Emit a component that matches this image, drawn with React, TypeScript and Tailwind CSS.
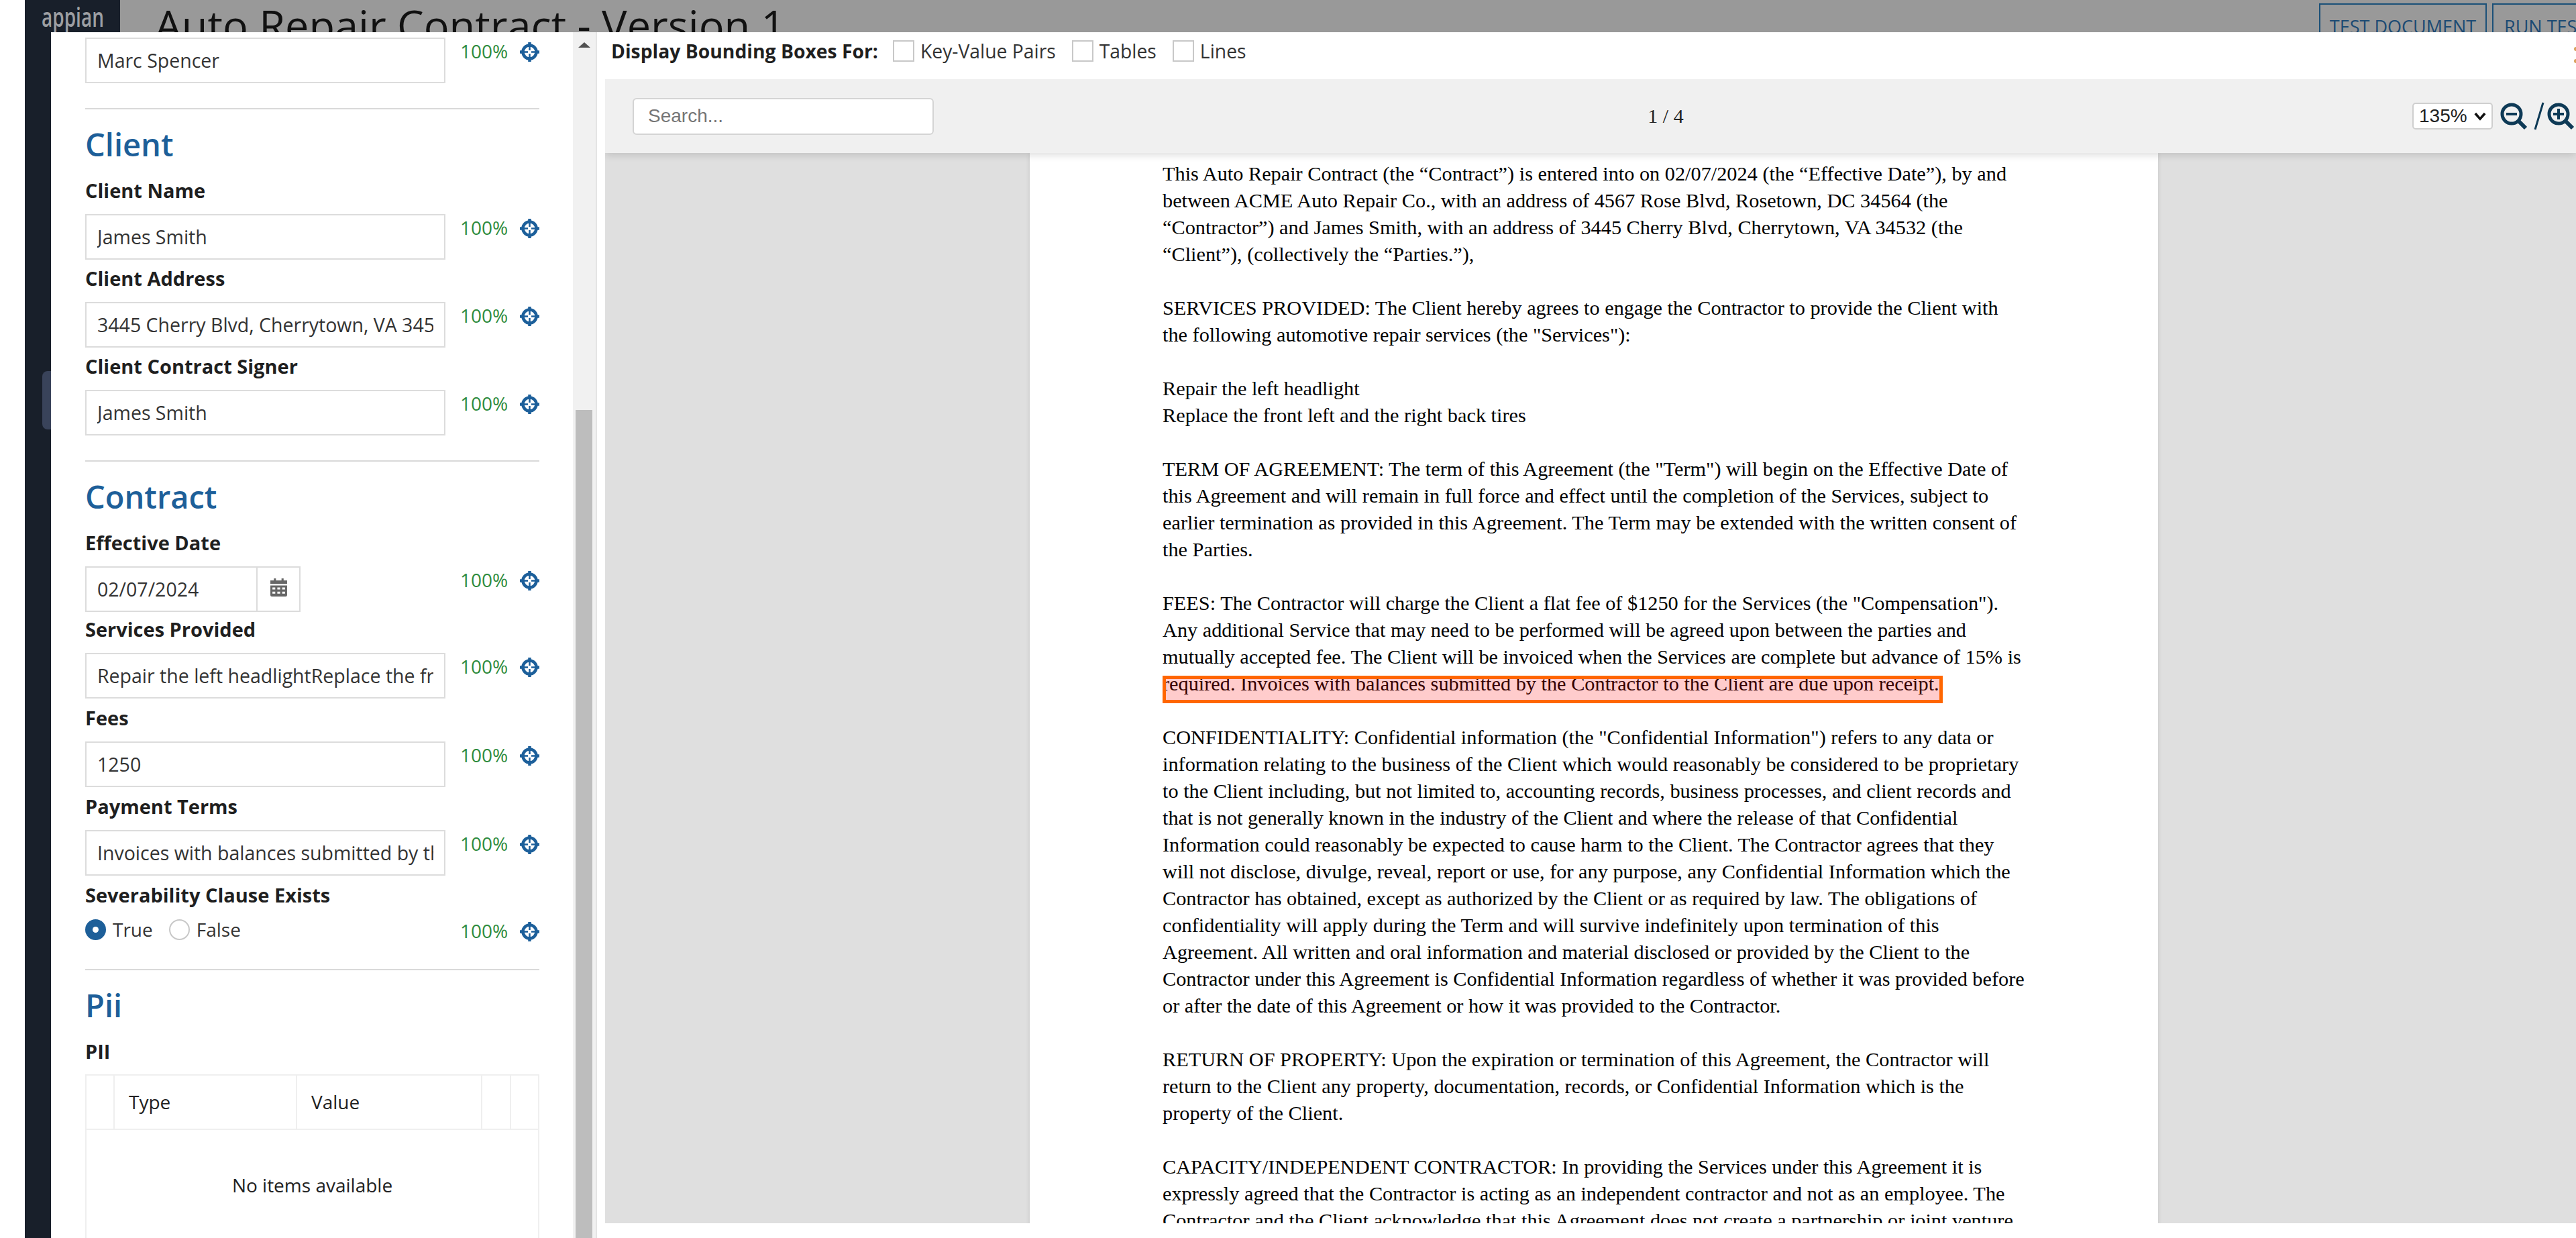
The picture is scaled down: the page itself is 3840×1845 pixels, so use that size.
import React from "react";

const FONT = "font-['Open_Sans',sans-serif]";

function Target() {
  return (
    <svg viewBox="0 0 29 29" className="w-[29px] h-[29px] shrink-0" fill="none" stroke="#1c5f9a">
      <circle cx="14.5" cy="14.5" r="10" strokeWidth="4.5" />
      <path d="M14.5 0v7M14.5 22v7M0 14.5h7M22 14.5h7" strokeWidth="4.5" />
      <path d="M14.5 6v6M14.5 17v6M6 14.5h6M17 14.5h6" strokeWidth="2.5" />
    </svg>
  );
}

function Conf({ top = "mt-[1px]" }: { top?: string }) {
  return (
    <div className={`flex items-start ${top}`}>
      <span className="ml-[22px] w-[69px] text-[28px] leading-[38px] text-[#2e8b3d]">100%</span>
      <span className="ml-[20px] mt-[6px]"><Target /></span>
    </div>
  );
}

function Label({ children }: { children: React.ReactNode }) {
  return <div className="h-[36px] text-[29px] leading-[36px] font-bold text-[#1f1f1f] whitespace-nowrap">{children}</div>;
}

function Field({ label, value }: { label: string; value: string }) {
  return (
    <div>
      <Label>{label}</Label>
      <div className="flex items-start w-[677px] mt-[17px]">
        <input readOnly value={value} className={`w-[537px] h-[68px] border-2 border-[#dcdcdc] bg-white px-[16px] text-[28.5px] text-[#333] outline-none ${FONT}`} />
        <Conf />
      </div>
    </div>
  );
}

function Heading({ children }: { children: React.ReactNode }) {
  return <div className="text-[47px] leading-[60px] font-semibold text-[#1d5f99]">{children}</div>;
}

const DOC: string[] = [
  "This Auto Repair Contract (the “Contract”) is entered into on 02/07/2024 (the “Effective Date”), by and",
  "between ACME Auto Repair Co., with an address of 4567 Rose Blvd, Rosetown, DC 34564 (the",
  "“Contractor”) and James Smith, with an address of 3445 Cherry Blvd, Cherrytown, VA 34532 (the",
  "“Client”), (collectively the “Parties.”),",
  "",
  "SERVICES PROVIDED: The Client hereby agrees to engage the Contractor to provide the Client with",
  "the following automotive repair services (the \"Services\"):",
  "",
  "Repair the left headlight",
  "Replace the front left and the right back tires",
  "",
  "TERM OF AGREEMENT: The term of this Agreement (the \"Term\") will begin on the Effective Date of",
  "this Agreement and will remain in full force and effect until the completion of the Services, subject to",
  "earlier termination as provided in this Agreement. The Term may be extended with the written consent of",
  "the Parties.",
  "",
  "FEES: The Contractor will charge the Client a flat fee of $1250 for the Services (the \"Compensation\").",
  "Any additional Service that may need to be performed will be agreed upon between the parties and",
  "mutually accepted fee. The Client will be invoiced when the Services are complete but advance of 15% is",
  "required. Invoices with balances submitted by the Contractor to the Client are due upon receipt.",
  "",
  "CONFIDENTIALITY: Confidential information (the \"Confidential Information\") refers to any data or",
  "information relating to the business of the Client which would reasonably be considered to be proprietary",
  "to the Client including, but not limited to, accounting records, business processes, and client records and",
  "that is not generally known in the industry of the Client and where the release of that Confidential",
  "Information could reasonably be expected to cause harm to the Client. The Contractor agrees that they",
  "will not disclose, divulge, reveal, report or use, for any purpose, any Confidential Information which the",
  "Contractor has obtained, except as authorized by the Client or as required by law. The obligations of",
  "confidentiality will apply during the Term and will survive indefinitely upon termination of this",
  "Agreement. All written and oral information and material disclosed or provided by the Client to the",
  "Contractor under this Agreement is Confidential Information regardless of whether it was provided before",
  "or after the date of this Agreement or how it was provided to the Contractor.",
  "",
  "RETURN OF PROPERTY: Upon the expiration or termination of this Agreement, the Contractor will",
  "return to the Client any property, documentation, records, or Confidential Information which is the",
  "property of the Client.",
  "",
  "CAPACITY/INDEPENDENT CONTRACTOR: In providing the Services under this Agreement it is",
  "expressly agreed that the Contractor is acting as an independent contractor and not as an employee. The",
  "Contractor and the Client acknowledge that this Agreement does not create a partnership or joint venture",
];

function Magnifier({ plus }: { plus?: boolean }) {
  return (
    <svg viewBox="0 0 41 41" className="w-[41px] h-[41px]" fill="none" stroke="#0e3a56">
      <circle cx="17" cy="17" r="14" strokeWidth="5" />
      <path d="M27 27l11 11" strokeWidth="6" />
      <path d="M9 17h16" strokeWidth="4" />
      {plus && <path d="M17 9v16" strokeWidth="4" />}
    </svg>
  );
}

function Check({ label }: { label: string }) {
  return (
    <div className="flex items-center">
      <span className="w-[32px] h-[32px] border-2 border-[#c8c8c8] bg-white" />
      <span className="ml-[9px] text-[28.3px] leading-[38px] text-[#333]">{label}</span>
    </div>
  );
}

export default function App() {
  return (
    <div className={`flex w-[3840px] h-[1845px] overflow-hidden bg-white ${FONT}`}>
      <div className="w-[37px] shrink-0" />
      <div className="flex flex-col flex-1 min-w-0">
        <div className="flex h-[48px] shrink-0 overflow-hidden bg-[#999999]">
          <div className="w-[142px] shrink-0 overflow-hidden bg-[#181f2a] pl-[25px] pt-[5px] text-[28px] leading-[28px] font-semibold text-[#9d9fa3]">
            <div className="scale-y-[1.4] origin-top">appian</div>
          </div>
          <div className="flex flex-1 justify-between">
            <div className="ml-[52px] -mt-[6px] text-[63px] leading-[86px] text-[#111] whitespace-nowrap">Auto Repair Contract - Version 1</div>
            <div className="flex gap-[8px] pt-[5px]">
              <div className="w-[250px] h-[70px] border-2 border-[#1b5078] text-center text-[27px] leading-[66px] text-[#1b4a73] whitespace-nowrap">TEST DOCUMENT</div>
              <div className="w-[125px] h-[70px] border-2 border-r-0 border-[#1b5078] pl-[16px] text-[27px] leading-[66px] text-[#1b4a73] whitespace-nowrap">RUN TEST</div>
            </div>
          </div>
        </div>
        <div className="flex flex-1 min-h-0">
          <div className="relative w-[39px] shrink-0 bg-[#181f2a]">
            <div className="absolute left-[26px] top-[505px] w-[13px] h-[87px] rounded-l-[8px] bg-[#39435a]" />
          </div>
          <div className="flex w-[813px] shrink-0 bg-white">
            <div className="w-[778px] shrink-0 pl-[51px] overflow-hidden">
              <div className="flex items-start mt-[8px] w-[677px]">
                <input readOnly value="Marc Spencer" className={`w-[537px] h-[68px] border-2 border-[#dcdcdc] bg-white px-[16px] text-[28.5px] text-[#333] outline-none ${FONT}`} />
                <Conf />
              </div>
              <div className="mt-[37px] w-[677px] h-[2px] bg-[#d9d9d9]" />
              <div className="mt-[22px]"><Heading>Client</Heading></div>
              <div className="mt-[21px] flex flex-col gap-[10px]">
                <Field label="Client Name" value="James Smith" />
                <Field label="Client Address" value="3445 Cherry Blvd, Cherrytown, VA 34532" />
                <Field label="Client Contract Signer" value="James Smith" />
              </div>
              <div className="mt-[37px] w-[677px] h-[2px] bg-[#d9d9d9]" />
              <div className="mt-[22px]"><Heading>Contract</Heading></div>
              <div className="mt-[21px]">
                <Label>Effective Date</Label>
                <div className="flex items-start w-[677px] mt-[17px]">
                  <div className="flex w-[321px] h-[68px] border-2 border-[#dcdcdc]">
                    <div className="w-[253px] px-[16px] text-[28.5px] leading-[64px] text-[#333]">02/07/2024</div>
                    <div className="flex flex-1 items-center justify-center border-l-2 border-[#dcdcdc] pb-[6px]">
                      <svg viewBox="0 0 24 26" className="w-[25px] h-[27px]" fill="#666">
                        <path d="M5 0h3v3h8V0h3v3h5v5H0V3h5zM0 10h24v14a2 2 0 0 1-2 2H2a2 2 0 0 1-2-2zm3 3v3h4v-3zm7 0v3h4v-3zm7 0v3h4v-3zM3 19v3h4v-3zm7 0v3h4v-3zm7 0v3h4v-3z" fillRule="evenodd" />
                      </svg>
                    </div>
                  </div>
                  <div className="ml-[216px]"><Conf /></div>
                </div>
              </div>
              <div className="mt-[8px] flex flex-col gap-[11px]">
                <Field label="Services Provided" value="Repair the left headlightReplace the front left and the right back tires" />
                <Field label="Fees" value="1250" />
                <Field label="Payment Terms" value="Invoices with balances submitted by the Contractor to the Client are due upon receipt." />
              </div>
              <div className="mt-[11px]">
                <Label>Severability Clause Exists</Label>
                <div className="flex items-start w-[677px] mt-[16px]">
                  <div className="flex w-[537px] h-[34px] items-center text-[28px] leading-[38px] text-[#333]">
                    <span className="flex items-center justify-center w-[31px] h-[31px] rounded-full bg-[#1d5f99]">
                      <span className="w-[9px] h-[9px] rounded-full bg-white" />
                    </span>
                    <span className="ml-[10px]">True</span>
                    <span className="ml-[24px] w-[31px] h-[31px] rounded-full border-2 border-[#c8c8c8]" />
                    <span className="ml-[10px]">False</span>
                  </div>
                  <Conf top="mt-[0px]" />
                </div>
              </div>
              <div className="mt-[38px] w-[677px] h-[2px] bg-[#d9d9d9]" />
              <div className="mt-[22px]"><Heading>Pii</Heading></div>
              <div className="mt-[21px]"><Label>PII</Label></div>
              <div className="mt-[16px] w-[677px] border-2 border-[#efefef] text-[28px] text-[#222]">
                <div className="flex h-[81px] border-b-2 border-[#efefef] leading-[78px]">
                  <div className="w-[42px] border-r-2 border-[#efefef]" />
                  <div className="w-[272px] border-r-2 border-[#efefef] pl-[21px]">Type</div>
                  <div className="w-[276px] border-r-2 border-[#efefef] pl-[21px]">Value</div>
                  <div className="w-[43px] border-r-2 border-[#efefef]" />
                </div>
                <div className="h-[400px] pt-[62px] text-center leading-[40px]">No items available</div>
              </div>
            </div>
            <div className="relative w-[34px] shrink-0 bg-[#f1f1f1]">
              <div className="absolute left-[8px] top-[15px] w-0 h-0 border-x-[9px] border-x-transparent border-b-[8px] border-b-[#505050]" />
              <div className="absolute left-[4px] right-[5px] top-[563px] bottom-0 bg-[#bdbdbd]" />
            </div>
            <div className="w-[1px] shrink-0 bg-[#e4e4e4]" />
          </div>
          <div className="relative flex-1 min-w-0 flex flex-col pl-[12px] bg-white border-l-2 border-[#e4e4e4] -ml-[1px]">
            <div className="flex items-center h-[70px] pl-[9px] pb-[14px] shrink-0">
              <span className="text-[28.3px] font-bold text-[#1f1f1f] whitespace-nowrap">Display Bounding Boxes For:</span>
              <div className="ml-[22px] flex items-center gap-[24px]">
                <Check label="Key-Value Pairs" />
                <Check label="Tables" />
                <Check label="Lines" />
              </div>
            </div>
            <div className="relative flex flex-col h-[1705px] shrink-0 overflow-hidden bg-[#dfdfdf]">
              <div className="relative z-10 flex items-center justify-between h-[110px] shrink-0 bg-[#f0f0f0] pl-[41px] shadow-[0_4px_10px_rgba(0,0,0,0.12)] font-['Liberation_Sans',sans-serif]">
                <div className="w-[449px] h-[55px] rounded-[6px] border-2 border-[#d4d4d4] bg-white pl-[21px] text-[28px] leading-[50px] text-[#757575]">Search...</div>
                <div className="absolute left-[1531px] top-0 w-[100px] text-center font-['Liberation_Serif',serif] text-[30px] leading-[110px] text-[#222]">1 / 4</div>
                <div className="flex items-center pr-[2px]">
                  <div className="flex items-center w-[120px] h-[40px] rounded-[5px] border-2 border-[#cfcfcf] bg-white pl-[8px] text-[28px] text-[#222]">
                    135%
                    <svg viewBox="0 0 20 14" className="ml-[10px] w-[18px] h-[13px]" fill="none" stroke="#111" strokeWidth="4"><path d="M2 2l8 9 8-9" /></svg>
                  </div>
                  <div className="ml-[11px]"><Magnifier /></div>
                  <svg viewBox="0 0 16 42" className="ml-[9px] w-[16px] h-[42px]" stroke="#0e3a56" strokeWidth="3"><path d="M14 1L2 41" /></svg>
                  <div className="ml-[4px]"><Magnifier plus /></div>
                </div>
              </div>
              <div className="ml-[633px] w-[1682px] flex-1 bg-white shadow-[0_0_6px_rgba(0,0,0,0.12)] pt-[11px] pl-[198px] font-['Liberation_Serif',serif] text-[30.3px] leading-[40px] text-black whitespace-nowrap">
                {DOC.map((line, i) =>
                  line === "" ? (
                    <div key={i} className="h-[40px]" />
                  ) : line.startsWith("required.") ? (
                    <div key={i} className="relative h-[40px]">
                      {line}
                      <div className="absolute left-0 top-[8px] w-[1163px] h-[41px] border-[5px] border-[#ff6600] bg-[#ff000033]" />
                    </div>
                  ) : (
                    <div key={i} className="h-[40px]">{line}</div>
                  )
                )}
              </div>
            </div>
            <div className="absolute right-0 top-[22px] w-[3px] h-[6px] rounded-l-full bg-[#d9a25f]" />
            <div className="absolute right-0 top-[40px] w-[3px] h-[6px] rounded-l-full bg-[#d9a25f]" />
          </div>
        </div>
      </div>
    </div>
  );
}
